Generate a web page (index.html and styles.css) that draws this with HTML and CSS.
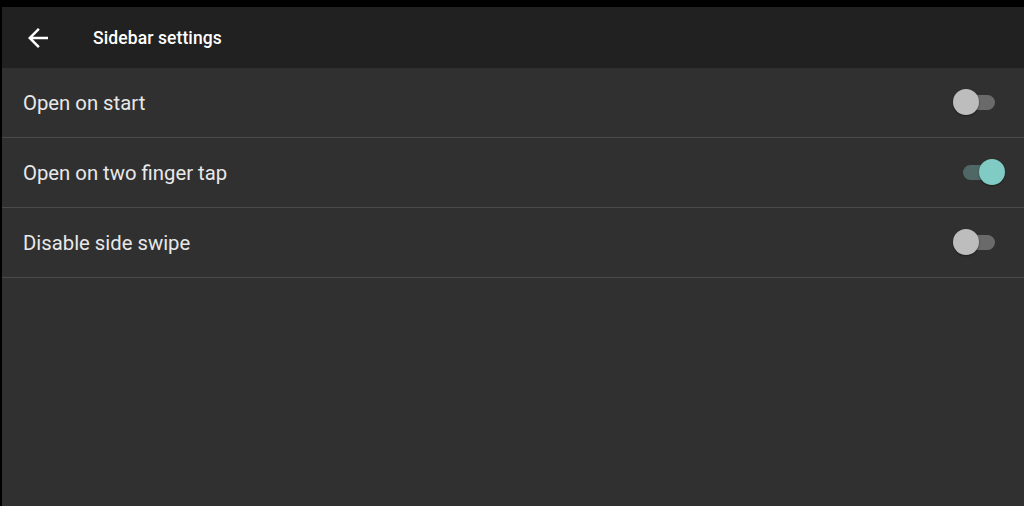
FILE: index.html
```html
<!DOCTYPE html>
<html lang="en">
<head>
    <meta charset="UTF-8">
    <meta name="viewport" content="width=device-width, initial-scale=1.0">
    <title>Sidebar settings</title>
    <link rel="stylesheet" href="styles.css">
</head>
<body>
    <div class="screen">
        <header class="toolbar">
            <button class="back" aria-label="Back">
                <svg width="30" height="30" viewBox="0 0 24 24">
                    <path d="M20 11H7.83l5.59-5.59L12 4l-8 8 8 8 1.41-1.41L7.83 13H20v-2z" fill="#fff"/>
                </svg>
            </button>
            <h1 class="title">Sidebar settings</h1>
        </header>

        <ul class="settings">
            <li class="row">
                <span class="label">Open on start</span>
                <span class="switch"><span class="thumb"></span></span>
            </li>
            <li class="row">
                <span class="label">Open on two finger tap</span>
                <span class="switch on"><span class="thumb"></span></span>
            </li>
            <li class="row">
                <span class="label">Disable side swipe</span>
                <span class="switch"><span class="thumb"></span></span>
            </li>
        </ul>
    </div>
</body>
</html>
```

FILE: styles.css
```css
/* Page frame */
body {
    margin: 0;
    background: #000;
    font-family: Roboto, "Noto Sans", sans-serif;
}

.screen {
    margin: 7px 0 0 2px;
    height: 499px;
    background: #303030;
}

/* Top app bar */
.toolbar {
    height: 61px;
    background: #212121;
    display: flex;
    align-items: center;
}

.back {
    width: 30px;
    height: 30px;
    padding: 0;
    margin-left: 21px;
    margin-top: 1px;
    border: none;
    background: none;
    display: flex;
}

.title {
    margin: 0 0 0 40px;
    font-size: 17.5px;
    font-weight: 500;
    color: #fff;
    letter-spacing: 0.1px;
}

/* Settings list */
.settings {
    list-style: none;
    margin: 0;
    padding: 0;
}

.row {
    height: 69px;
    border-bottom: 1px solid #4a4a4a;
    display: flex;
    align-items: center;
    justify-content: space-between;
    padding: 0 29px 0 21px;
}

.label {
    font-size: 20.3px;
    color: #e8e8e8;
    margin-top: 0;
}

/* Switches */
.switch {
    position: relative;
    width: 36px;
    height: 15px;
    border-radius: 8px;
    background: #6a6a6a;
    margin-top: 0;
}

.thumb {
    position: absolute;
    top: -6px;
    left: -6px;
    width: 26px;
    height: 26px;
    border-radius: 50%;
    background: #bdbdbd;
    box-shadow: 0 1px 2px rgba(0, 0, 0, 0.4);
}

.switch.on {
    background: #4f6866;
    margin-right: -4px;
}

.switch.on .thumb {
    left: 16px;
    background: #80cbc4;
}
```
